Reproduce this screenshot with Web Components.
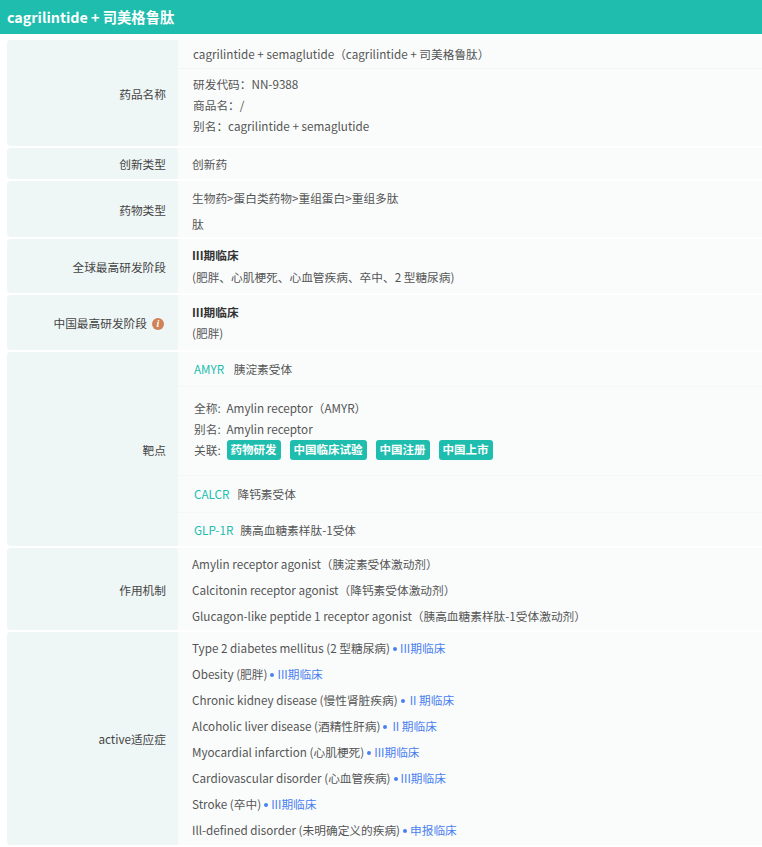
<!DOCTYPE html>
<html lang="zh">
<head>
<meta charset="utf-8">
<title>cagrilintide + 司美格鲁肽</title>
<style>
  html, body { margin: 0; padding: 0; background: #fff; overflow: hidden; }
  body { font-family: "Noto Sans CJK SC", "Noto Sans", sans-serif; font-size: 11.7px; color: #555; }
</style>
</head>
<body>
<drug-header>cagrilintide + 司美格鲁肽</drug-header>
<info-table>
  <info-row style="--h:106px">
    <span slot="label">药品名称</span>
    <div style="padding-left:15px;height:28px;line-height:28px;border-bottom:1px solid #f2f5f5">cagrilintide + semaglutide（cagrilintide + 司美格鲁肽）</div>
    <div style="padding:4px 15px 0;line-height:21px">研发代码：NN-9388<br>商品名：/<br>别名：cagrilintide + semaglutide</div>
  </info-row>
  <info-row style="--h:31px">
    <span slot="label">创新类型</span>
    <div style="padding-left:14px;line-height:31px">创新药</div>
  </info-row>
  <info-row style="--h:56px">
    <span slot="label">药物类型</span>
    <div style="padding:4px 14px 0;line-height:26px">生物药&gt;蛋白类药物&gt;重组蛋白&gt;重组多肽<br>肽</div>
  </info-row>
  <info-row style="--h:54px">
    <span slot="label">全球最高研发阶段</span>
    <stage-cell stage="III期临床" style="--top:5px;--between:1px">(肥胖、心肌梗死、心血管疾病、卒中、2 型糖尿病)</stage-cell>
  </info-row>
  <info-row style="--h:55px">
    <span slot="label">中国最高研发阶段<info-dot></info-dot></span>
    <stage-cell stage="III期临床" style="--top:6px;--between:0px">(肥胖)</stage-cell>
  </info-row>
  <info-row style="--h:194px">
    <span slot="label">靶点</span>
    <target-item code="AMYR" name="胰淀素受体" style="height:35px;line-height:34px;--code-gap:9.5px"></target-item>
    <target-detail>
      <detail-line label="全称:">Amylin receptor（AMYR）</detail-line>
      <detail-line label="别名:">Amylin receptor</detail-line>
      <detail-line label="关联:"><link-tag>药物研发</link-tag><link-tag>中国临床试验</link-tag><link-tag>中国注册</link-tag><link-tag>中国上市</link-tag></detail-line>
    </target-detail>
    <target-item code="CALCR" name="降钙素受体" style="height:37px;--code-gap:8px"></target-item>
    <target-item code="GLP-1R" name="胰高血糖素样肽-1受体" style="height:33px;line-height:33px;border:0;--code-gap:7px"></target-item>
  </info-row>
  <info-row style="--h:82px">
    <span slot="label">作用机制</span>
    <div style="padding:3px 14px 0;line-height:26px">Amylin receptor agonist（胰淀素受体激动剂）<br>Calcitonin receptor agonist（降钙素受体激动剂）<br>Glucagon-like peptide 1 receptor agonist（胰高血糖素样肽-1受体激动剂）</div>
  </info-row>
  <info-row style="--h:213px">
    <span slot="label">active适应症</span>
    <div style="padding:3px 14px 0">
      <indication-line stage="III期临床">Type 2 diabetes mellitus (2 型糖尿病)</indication-line>
      <indication-line stage="III期临床">Obesity (肥胖)</indication-line>
      <indication-line stage="II 期临床" style="--gap:5px">Chronic kidney disease (慢性肾脏疾病)</indication-line>
      <indication-line stage="II 期临床" style="--gap:5px">Alcoholic liver disease (酒精性肝病)</indication-line>
      <indication-line stage="III期临床">Myocardial infarction (心肌梗死)</indication-line>
      <indication-line stage="III期临床">Cardiovascular disorder (心血管疾病)</indication-line>
      <indication-line stage="III期临床">Stroke (卒中)</indication-line>
      <indication-line stage="申报临床">Ill-defined disorder (未明确定义的疾病)</indication-line>
    </div>
  </info-row>
</info-table>
<script>
function define(tag, css, html, setup) {
  customElements.define(tag, class extends HTMLElement {
    connectedCallback() {
      if (this.shadowRoot) return;
      const root = this.attachShadow({ mode: 'open' });
      root.innerHTML = `<style>${css}</style>${html}`;
      if (setup) setup(this, root);
    }
  });
}

define('drug-header', `
  :host { display: block; height: 34px; background: #1ebdae; color: #fff; font-size: 14.3px; font-weight: 700; line-height: 33px; padding-left: 7px; }
`, `<slot></slot>`);

define('info-table', `
  :host { display: flex; flex-direction: column; gap: 2px; padding: 6px 0 0 7px; }
`, `<slot></slot>`);

define('info-row', `
  :host { display: grid; grid-template-columns: 171px 1fr; height: var(--h); }
  .label { background: #eff6f6; border-radius: 4px 0 0 4px; color: #444; display: flex; align-items: center; justify-content: flex-end; padding-right: 12px; }
  .value { background: #fafcfc; min-width: 0; }
`, `<div class="label"><slot name="label"></slot></div><div class="value"><slot></slot></div>`);

define('info-dot', `
  :host { display: inline-flex; width: 12px; height: 12px; margin: 0 2px 0 5px; border-radius: 50%; background: #d08258; color: #fff; font: italic 700 10px/12px "Liberation Serif", serif; align-items: center; justify-content: center; vertical-align: 1px; }
`, `i`);

define('stage-cell', `
  :host { display: block; padding: var(--top) 14px 0; line-height: 21px; }
  b { color: #333; display: block; height: 21px; }
  div { margin-top: var(--between); }
`, `<b></b><div><slot></slot></div>`, (el, root) => {
  root.querySelector('b').textContent = el.getAttribute('stage');
});

define('target-item', `
  :host { display: block; box-sizing: border-box; padding-left: 16px; line-height: 35px; border-bottom: 1px solid #f4f7f7; }
  a { color: #1ebdae; margin-right: var(--code-gap, 9px); }
`, `<a></a><span></span>`, (el, root) => {
  root.querySelector('a').textContent = el.getAttribute('code');
  root.querySelector('span').textContent = el.getAttribute('name');
});

define('target-detail', `
  :host { display: block; box-sizing: border-box; height: 89px; padding: 10px 0 0 16px; border-bottom: 1px solid #f4f7f7; }
`, `<slot></slot>`);

define('detail-line', `
  :host { display: flex; align-items: center; height: 21px; }
  span { width: 32.5px; flex: none; }
`, `<span></span><slot></slot>`, (el, root) => {
  root.querySelector('span').textContent = el.getAttribute('label');
});

define('link-tag', `
  :host { display: inline-block; height: 20px; line-height: 19px; padding: 0 4px; margin-right: 9px; background: #1ebdae; color: #fff; border-radius: 3px; font-size: 11.5px; font-weight: 700; }
`, `<slot></slot>`);

define('indication-line', `
  :host { display: block; height: 26px; line-height: 26px; white-space: nowrap; }
  i { display: inline-block; width: 4px; height: 4px; border-radius: 50%; background: #4a80f0; margin: 0 var(--gap, 3px) 0 3px; vertical-align: 2px; }
  span { color: #4a80f0; }
`, `<slot></slot><i></i><span></span>`, (el, root) => {
  root.querySelector('span').textContent = el.getAttribute('stage');
});
</script>
</body>
</html>
